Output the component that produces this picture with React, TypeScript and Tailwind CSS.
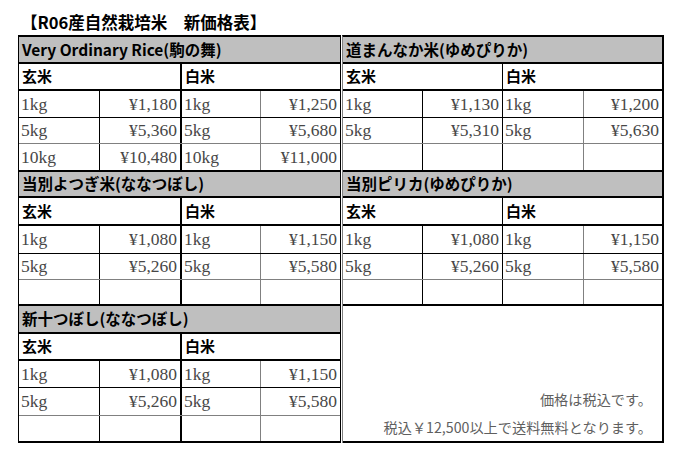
import React from 'react';

type Pair = [string, string] | null;

interface Rice {
  name: string;
  brown: Pair[];
  white: Pair[];
}

// row heights (incl. bottom border) for each band of sections
const bands = [
  ['h-[27px]', 'h-[27px]', 'h-[27px]', 'h-[26px]', 'h-[28px]'],
  ['h-[26px]', 'h-[28px]', 'h-[28px]', 'h-[26px]', 'h-[26px]'],
  ['h-[28px]', 'h-[27px]', 'h-[27px]', 'h-[28px]', 'h-[27px]']
];

const leftRice: Rice[] = [
  {
    name: 'Very Ordinary Rice(駒の舞)',
    brown: [['1kg', '¥1,180'], ['5kg', '¥5,360'], ['10kg', '¥10,480']],
    white: [['1kg', '¥1,250'], ['5kg', '¥5,680'], ['10kg', '¥11,000']]
  },
  {
    name: '当別よつぎ米(ななつぼし)',
    brown: [['1kg', '¥1,080'], ['5kg', '¥5,260'], null],
    white: [['1kg', '¥1,150'], ['5kg', '¥5,580'], null]
  },
  {
    name: '新十つぼし(ななつぼし)',
    brown: [['1kg', '¥1,080'], ['5kg', '¥5,260'], null],
    white: [['1kg', '¥1,150'], ['5kg', '¥5,580'], null]
  }
];

const rightRice: Rice[] = [
  {
    name: '道まんなか米(ゆめぴりか)',
    brown: [['1kg', '¥1,130'], ['5kg', '¥5,310'], null],
    white: [['1kg', '¥1,200'], ['5kg', '¥5,630'], null]
  },
  {
    name: '当別ピリカ(ゆめぴりか)',
    brown: [['1kg', '¥1,080'], ['5kg', '¥5,260'], null],
    white: [['1kg', '¥1,150'], ['5kg', '¥5,580'], null]
  }
];

const gothic = "font-['Noto_Sans_CJK_JP',sans-serif]";
const serif = "font-['Liberation_Serif','Noto_Sans_CJK_JP',serif]";

// bottom border per data row: first black, second gray, last thick
const rowLines = ['border-b border-black', 'border-b border-[#808080]', 'border-b-2 border-black'];

function Section({ rice, band, right }: { rice: Rice; band: string[]; right?: boolean }) {
  const w = right
    ? ['w-[80px] border-r border-black', 'w-[80px] border-r border-black', 'w-[81px] border-r border-[#808080]']
    : ['w-[81px] border-r border-black', 'w-[82px] border-r-2 border-black', 'w-[79px] border-r border-[#808080]'];
  const half = right ? 'w-[160px] border-r border-black' : 'w-[163px] border-r-2 border-black';

  return (
    <>
      <div className={`${band[0]} flex items-center bg-[#bfbfbf] border-b-2 border-black pl-[3px] ${gothic} font-bold text-[15.5px] text-black`}>
        {rice.name}
      </div>
      <div className={`${band[1]} flex border-b-2 border-black ${gothic} font-bold text-[15px] text-black`}>
        <div className={`${half} flex items-center pl-[3px]`}>玄米</div>
        <div className="flex-1 flex items-center pl-[3px]">白米</div>
      </div>
      {[0, 1, 2].map((i) => {
        const b = rice.brown[i];
        const wh = rice.white[i];
        return (
          <div key={i} className={`${band[i + 2]} flex ${rowLines[i]} ${serif} text-[17.5px] text-[#474747]`}>
            <div className={`${w[0]} flex items-center pl-[2px]`}>{b?.[0]}</div>
            <div className={`${w[1]} flex items-center justify-end pr-[3px]`}>{b?.[1]}</div>
            <div className={`${w[2]} flex items-center pl-[2px]`}>{wh?.[0]}</div>
            <div className="flex-1 flex items-center justify-end pr-[3px]">{wh?.[1]}</div>
          </div>
        );
      })}
    </>
  );
}

export default function App() {
  return (
    <div className="w-[693px] h-[452px] bg-white pl-[18px] overflow-hidden">
      <div className={`h-[35px] flex items-center pt-[10px] pl-[3px] ${gothic} font-bold text-[16.5px] text-black`}>
        【R06産自然栽培米　新価格表】
      </div>

      <div className="flex">
        {/* left column of tables */}
        <div className="w-[323px] flex flex-col border-t-2 border-l border-r border-black">
          {leftRice.map((r, i) => (
            <Section key={r.name} rice={r} band={bands[i]} />
          ))}
        </div>

        {/* right column of tables */}
        <div className="ml-[1px] w-[322px] flex flex-col border-t-2 border-l border-l-[#808080] border-r-2 border-r-black">
          {rightRice.map((r, i) => (
            <Section key={r.name} rice={r} band={bands[i]} right />
          ))}
          <div className={`h-[137px] flex flex-col justify-end border-b-2 border-black ${gothic} text-[14.2px] text-[#5f5f5f]`}>
            <div className="h-[28px] flex items-center justify-end pr-[10px]">価格は税込です。</div>
            <div className="h-[27px] flex items-center justify-end pr-[10px]">税込￥12,500以上で送料無料となります。</div>
          </div>
        </div>
      </div>
    </div>
  );
}
